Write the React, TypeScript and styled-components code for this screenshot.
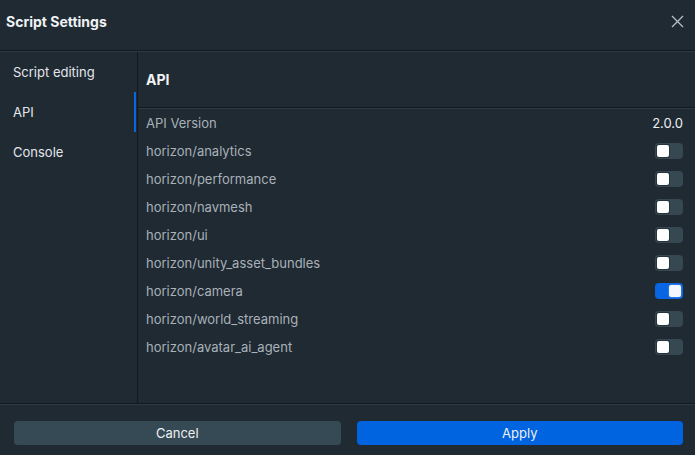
import React, { useState } from "react";
import styled, { createGlobalStyle } from "styled-components";

const Global = createGlobalStyle`
  html, body { margin: 0; padding: 0; background: #1f2a33; }
  body { font-family: Inter, "Noto Sans", sans-serif; -webkit-font-smoothing: antialiased; }
  * { box-sizing: border-box; }
`;

const Dialog = styled.div`
  width: 695px;
  height: 455px;
  background: #1f2a33;
  display: flex;
  flex-direction: column;
  color: #e4e6eb;
  overflow: hidden;
`;

const Header = styled.div`
  height: 52px;
  flex: none;
  display: flex;
  align-items: center;
  justify-content: space-between;
  padding: 0 10px 8px 6px;
  border-bottom: 1px solid #2d3b45;
  box-shadow: inset 0 -1px 0 #11191f;
`;

const Title = styled.h1`
  margin: 0;
  font-size: 14px;
  font-weight: 700;
  color: #f0f2f4;
`;

const CloseButton = styled.button`
  background: none;
  border: none;
  padding: 0;
  width: 16px;
  height: 16px;
  display: flex;
  align-items: center;
  justify-content: center;
  cursor: pointer;
`;

const Body = styled.div`
  flex: 1;
  display: flex;
  min-height: 0;
`;

const Sidebar = styled.nav`
  width: 138px;
  flex: none;
  border-right: 1px solid #11191f;
  display: flex;
  flex-direction: column;
`;

const NavItem = styled.div<{ $active?: boolean }>`
  height: 40px;
  display: flex;
  align-items: center;
  padding-left: 13px;
  font-size: 13px;
  color: #e4e6eb;
  box-shadow: ${(p) => (p.$active ? "inset -2px 0 0 #0a66e4" : "none")};
  margin-right: 1px;
`;

const Content = styled.section`
  flex: 1;
  display: flex;
  flex-direction: column;
`;

const SectionHeader = styled.div`
  height: 57px;
  flex: none;
  display: flex;
  align-items: center;
  padding: 0 0 2px 8px;
  font-size: 14px;
  font-weight: 700;
  color: #f0f2f4;
  border-bottom: 1px solid #2d3b45;
  box-shadow: inset 0 -1px 0 #11191f;
`;

const Row = styled.div`
  height: 28px;
  display: flex;
  align-items: center;
  justify-content: space-between;
  padding: 0 12px 0 8px;
  font-size: 13px;
  color: #a9b1b8;
`;

const Value = styled.span`
  color: #eef0f2;
`;

const Track = styled.button<{ $on: boolean }>`
  width: 28px;
  height: 16px;
  border: none;
  border-radius: 4px;
  padding: 2px;
  display: flex;
  justify-content: ${(p) => (p.$on ? "flex-end" : "flex-start")};
  background: ${(p) => (p.$on ? "#0866e2" : "#364852")};
  cursor: pointer;
`;

const Knob = styled.span<{ $on: boolean }>`
  width: 12px;
  height: 12px;
  border-radius: 2px;
  background: ${(p) => (p.$on ? "#f3f6ff" : "#ffffff")};
  box-shadow: 0 0 0 1px ${(p) => (p.$on ? "#2a74e0" : "#26343d")};
`;

const Footer = styled.div`
  height: 52px;
  flex: none;
  display: flex;
  align-items: center;
  gap: 16px;
  padding: 6px 12px 0 14px;
  border-top: 1px solid #11191f;
  box-shadow: inset 0 1px 0 #2d3b45;
`;

const Button = styled.button<{ $primary?: boolean }>`
  flex: 1;
  height: 24px;
  border: none;
  border-radius: 4px;
  font-family: Inter, "Noto Sans", sans-serif;
  font-size: 13px;
  color: #eef0f2;
  background: ${(p) => (p.$primary ? "#0064e0" : "#364a55")};
  cursor: pointer;
`;

const apis = [
  { name: "horizon/analytics", on: false },
  { name: "horizon/performance", on: false },
  { name: "horizon/navmesh", on: false },
  { name: "horizon/ui", on: false },
  { name: "horizon/unity_asset_bundles", on: false },
  { name: "horizon/camera", on: true },
  { name: "horizon/world_streaming", on: false },
  { name: "horizon/avatar_ai_agent", on: false },
];

export default function App() {
  const [state, setState] = useState(apis.map((a) => a.on));
  return (
    <>
      <Global />
      <Dialog>
        <Header>
          <Title>Script Settings</Title>
          <CloseButton aria-label="Close">
            <svg width="13" height="13" viewBox="0 0 13 13">
              <path d="M1 1L12 12M12 1L1 12" stroke="#b8c0c6" strokeWidth="1.3" />
            </svg>
          </CloseButton>
        </Header>
        <Body>
          <Sidebar>
            <NavItem>Script editing</NavItem>
            <NavItem $active>API</NavItem>
            <NavItem>Console</NavItem>
          </Sidebar>
          <Content>
            <SectionHeader>API</SectionHeader>
            <Row>
              <span>API Version</span>
              <Value>2.0.0</Value>
            </Row>
            {apis.map((a, i) => (
              <Row key={a.name}>
                <span>{a.name}</span>
                <Track
                  $on={state[i]}
                  onClick={() => setState((s) => s.map((v, j) => (j === i ? !v : v)))}
                >
                  <Knob $on={state[i]} />
                </Track>
              </Row>
            ))}
          </Content>
        </Body>
        <Footer>
          <Button>Cancel</Button>
          <Button $primary>Apply</Button>
        </Footer>
      </Dialog>
    </>
  );
}
